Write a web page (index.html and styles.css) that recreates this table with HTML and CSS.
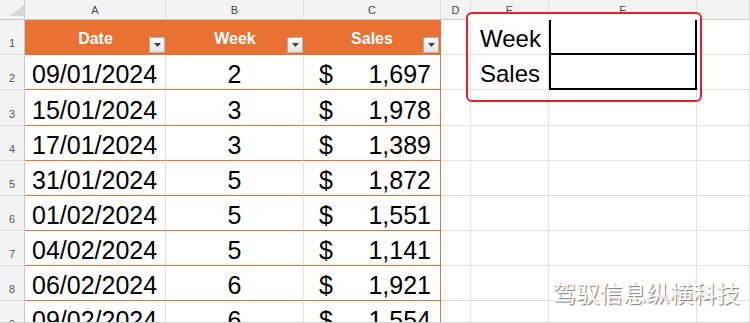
FILE: index.html
```html
<!DOCTYPE html>
<html lang="en">
<head>
<meta charset="utf-8">
<title>Sheet</title>
<link rel="stylesheet" href="styles.css">
</head>
<body>
<div class="sheet">
  <div class="grid">
    <div class="corner"><svg width="14" height="11" viewBox="0 0 14 11"><polygon points="14,0 14,11 0,11" fill="#d6d6d6"/></svg></div>
    <div class="ch">A</div><div class="ch">B</div><div class="ch">C</div><div class="ch">D</div><div class="ch">E</div><div class="ch">F</div><div class="ch"></div>

    <div class="rh">1</div>
    <div class="c th">Date<span class="fb"><svg width="7" height="4" viewBox="0 0 7 4"><polygon points="0,0 7,0 3.5,4" fill="#404040"/></svg></span></div>
    <div class="c th">Week<span class="fb"><svg width="7" height="4" viewBox="0 0 7 4"><polygon points="0,0 7,0 3.5,4" fill="#404040"/></svg></span></div>
    <div class="c th thc">Sales<span class="fb"><svg width="7" height="4" viewBox="0 0 7 4"><polygon points="0,0 7,0 3.5,4" fill="#404040"/></svg></span></div>
    <div class="c"></div><div class="c lbl">Week</div><div class="c box"></div><div class="c"></div>

    <div class="rh">2</div>
    <div class="c td da">09/01/2024</div><div class="c td wk">2</div><div class="c td sa"><span>$</span><span>1,697</span></div>
    <div class="c"></div><div class="c lbl">Sales</div><div class="c box"></div><div class="c"></div>

    <div class="rh">3</div>
    <div class="c td da">15/01/2024</div><div class="c td wk">3</div><div class="c td sa"><span>$</span><span>1,978</span></div>
    <div class="c"></div><div class="c"></div><div class="c"></div><div class="c"></div>

    <div class="rh">4</div>
    <div class="c td da">17/01/2024</div><div class="c td wk">3</div><div class="c td sa"><span>$</span><span>1,389</span></div>
    <div class="c"></div><div class="c"></div><div class="c"></div><div class="c"></div>

    <div class="rh">5</div>
    <div class="c td da">31/01/2024</div><div class="c td wk">5</div><div class="c td sa"><span>$</span><span>1,872</span></div>
    <div class="c"></div><div class="c"></div><div class="c"></div><div class="c"></div>

    <div class="rh">6</div>
    <div class="c td da">01/02/2024</div><div class="c td wk">5</div><div class="c td sa"><span>$</span><span>1,551</span></div>
    <div class="c"></div><div class="c"></div><div class="c"></div><div class="c"></div>

    <div class="rh">7</div>
    <div class="c td da">04/02/2024</div><div class="c td wk">5</div><div class="c td sa"><span>$</span><span>1,141</span></div>
    <div class="c"></div><div class="c"></div><div class="c"></div><div class="c"></div>

    <div class="rh">8</div>
    <div class="c td da">06/02/2024</div><div class="c td wk">6</div><div class="c td sa"><span>$</span><span>1,921</span></div>
    <div class="c"></div><div class="c"></div><div class="c"></div><div class="c"></div>

    <div class="rh">9</div>
    <div class="c td da">09/02/2024</div><div class="c td wk">6</div><div class="c td sa"><span>$</span><span>1,554</span></div>
    <div class="c"></div><div class="c"></div><div class="c"></div><div class="c"></div>
  </div>
  <div class="annot"></div>
  <div class="wm">驾驭信息纵横科技</div>
</div>
</body>
</html>
```
FILE: styles.css
```css
* { box-sizing: border-box; }
html, body { margin: 0; padding: 0; }
body {
  background: #fff;
  font-family: "Liberation Sans", Arial, sans-serif;
  overflow: hidden;
}
.sheet {
  position: relative;
  width: 750px;
  height: 323px;
  overflow: hidden;
  border-bottom: 1px solid #d4d4d4;
}
.grid {
  display: grid;
  grid-template-columns: 25px 141px 138px 137px 30px 78px 148px 1fr;
  grid-template-rows: 20px 35px 35px 36px 35px 35px 35px 35px 35px 35px;
}
.corner {
  background: #f3f3f3;
  border-right: 1px solid #c9c9c9;
  border-bottom: 1px solid #c9c9c9;
  display: flex;
  justify-content: flex-end;
  align-items: flex-end;
  padding-bottom: 3px;
}
.corner svg { display: block; }
.ch {
  background: #f3f3f3;
  border-right: 1px solid #dcdcdc;
  border-bottom: 1px solid #c9c9c9;
  color: #454545;
  font-size: 11px;
  display: flex;
  align-items: center;
  justify-content: center;
}
.rh {
  background: #f3f3f3;
  border-right: 1px solid #c9c9c9;
  border-bottom: 1px solid #dcdcdc;
  color: #555;
  font-size: 11px;
  line-height: 11px;
  display: flex;
  justify-content: center;
  align-items: flex-end;
  padding-bottom: 5px;
}
.c {
  border-right: 1px solid #e1e1e1;
  border-bottom: 1px solid #e1e1e1;
  display: flex;
  align-items: flex-end;
  font-size: 25px;
  line-height: 25px;
  padding-bottom: 2px;
  color: #000;
  white-space: nowrap;
}
.th {
  position: relative;
  background: #e97132;
  color: #fff;
  font-weight: bold;
  font-size: 16px;
  line-height: 18px;
  border: none;
  padding: 2px 0 0 0;
  justify-content: center;
  align-items: center;
}
.thc { border-right: 1px solid #e97132; }
.fb {
  position: absolute;
  right: 1px;
  bottom: 2px;
  width: 16px;
  height: 16px;
  border: 1px solid #b3b3b3;
  background: linear-gradient(#ffffff, #e4e4e4);
  display: flex;
  align-items: center;
  justify-content: center;
}
.fb svg { display: block; }
.td { border-bottom-color: #e97132; }
.da { padding-left: 7px; }
.wk { justify-content: center; }
.sa {
  justify-content: space-between;
  padding-left: 15px;
  padding-right: 9px;
  border-right-color: #e97132;
}
.lbl {
  font-size: 24px;
  line-height: 24px;
  padding-left: 9px;
  padding-bottom: 3px;
}
.box {
  border-left: 2px solid #000;
  border-right: 2px solid #000;
  border-bottom: 2px solid #000;
}
.annot {
  position: absolute;
  left: 466px;
  top: 12px;
  width: 236px;
  height: 90px;
  border: 2px solid #ee1c24;
  border-radius: 6px;
  background: linear-gradient(#fff 0 6px, transparent 6px);
}
.wm {
  position: absolute;
  left: 553px;
  top: 281px;
  font-family: "Noto Sans CJK SC", sans-serif;
  font-size: 23px;
  line-height: 1;
  letter-spacing: 0.4px;
  color: #fff;
  text-shadow: 1px 1px 1px rgba(0, 0, 0, 0.55);
}
```
